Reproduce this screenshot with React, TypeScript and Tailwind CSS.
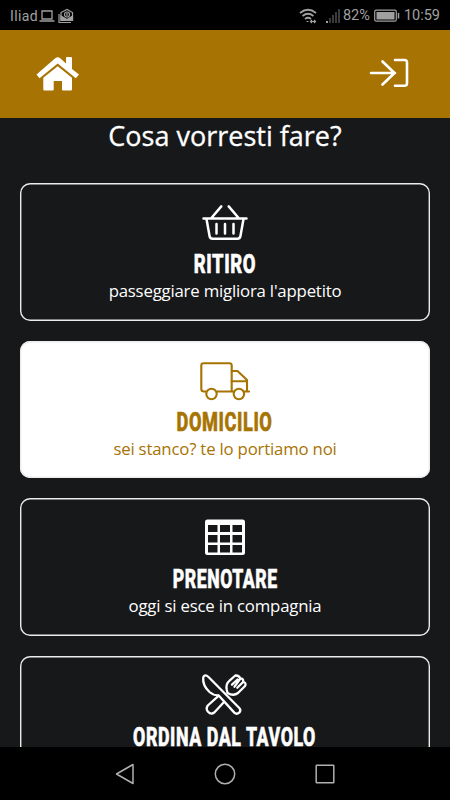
import React, { useState } from 'react'

type Choice = {
  id: string;
  title: string;
  subtitle?: string;
  titleClass: string;
  icon: React.ReactNode;
}

const BasketIcon = () => (
  <svg className="block w-[50px] h-[42px]" viewBox="0 0 50 42" fill="none" stroke="currentColor" strokeWidth="2.5" strokeLinecap="round" strokeLinejoin="round">
    <path d="M3.5 15.5H46.5M6.5 16L9.6 33.2Q10.1 35.7 12.6 35.7H37.4Q39.9 35.7 40.4 33.2L43.5 16M11.8 14.5L21.3 3.4M38.2 14.5L28.7 3.4" />
    <path d="M16.5 21V30.5M25 21V30.5M33.5 21V30.5" />
  </svg>
)

const TruckIcon = () => (
  <svg className="block w-[50px] h-[42px]" viewBox="0 0 50 42" fill="none" stroke="currentColor" strokeWidth="2.1" strokeLinecap="round" strokeLinejoin="round">
    <path d="M6 30.5H4Q1.3 30.5 1.3 28V4.5Q1.3 2.3 3.5 2.3H29.500Q31.700 2.300 31.700 4.500V30.500M17 30.500H33.500" />
    <path d="M31.700 10H37.500L47 19V30.500H49M44.500 30.500H49M31.700 20.200H47" />
    <circle cx="11.500" cy="33" r="5.200" />
    <circle cx="38.900" cy="33" r="5.200" />
  </svg>
)

const TableIcon = () => (
  <svg className="block w-[50px] h-[42px]" viewBox="0 0 50 42" fill="currentColor">
    <path fillRule="evenodd" d="M7.500 1.500H42.500Q45 1.500 45 4V34.500Q45 37 42.500 37H7.500Q5 37 5 34.500V4Q5 1.500 7.500 1.500ZM8 7V14H17.500V7ZM20 7V14H30V7ZM32.500 7V14H42V7ZM8 17V24.500H17.500V17ZM20 17V24.500H30V17ZM32.500 17V24.500H42V17ZM8 27V34.500H17.500V27ZM20 27V34.500H30V27ZM32.500 27V34.500H42V27Z" />
  </svg>
)

const CutleryIcon = () => (
  <svg className="block w-[50px] h-[42px] overflow-visible" viewBox="0 1 50 42" fill="none" stroke="currentColor" strokeWidth="2.3" strokeLinecap="round" strokeLinejoin="round">
    <path d="M4.300 .7Q6 -.3 8.500 2L39.300 33Q41.400 35.200 39.200 37.700Q36.600 39.800 34.300 37.600L18.500 20.300Q13.500 20.500 9.500 17Q2.500 10.500 3.200 3Q3.300 1.200 4.300 .7Z" />
    <path d="M35.300 .5L29.300 5.800Q25.600 8.800 26.700 14.500L27.500 18Q33.500 21.500 38 18L44.800 11.300Q46.700 8.500 44 7.300L43.100 6.600Q43.800 3.400 40.200 3.300Q39 .2 35.300 .5Z" />
    <path d="M37.500 4.500L32 9.700M40.200 3.800L34.500 11.700M43.100 7L37.300 12.800" />
    <path d="M18.500 20.800L7.800 30.500Q5.500 34 8 36.800Q11 40 14.300 37.500L24 27" />
  </svg>
)

const choices: Choice[] = [
  { id: 'ritiro', title: 'RITIRO', subtitle: "passeggiare migliora l'appetito", titleClass: 'scale-x-[0.71]', icon: <BasketIcon /> },
  { id: 'domicilio', title: 'DOMICILIO', subtitle: 'sei stanco? te lo portiamo noi', titleClass: 'scale-x-[0.7]', icon: <TruckIcon /> },
  { id: 'prenotare', title: 'PRENOTARE', subtitle: 'oggi si esce in compagnia', titleClass: 'scale-x-[0.68]', icon: <TableIcon /> },
  { id: 'tavolo', title: 'ORDINA DAL TAVOLO', titleClass: 'scale-x-[0.685]', icon: <CutleryIcon /> },
]

const StatusBar = () => (
  <div className="flex h-[30px] shrink-0 items-center bg-black pl-[10px] pr-[10px] pt-[2px] font-[Roboto,sans-serif] text-[14px] leading-none text-[#a0a0a0]">
    <span className="tracking-[0.4px]">Iliad</span>
    <svg className="ml-[1px] h-[14px] w-[16px]" viewBox="0 0 16 14" fill="none" stroke="currentColor" strokeWidth="1.3">
      <path d="M3 2H13V10H3ZM.5 12H15.5" />
    </svg>
    <svg className="ml-[3px] h-[16px] w-[16px]" viewBox="0 0 16 16" fill="none" stroke="currentColor" strokeWidth="1.2">
      <path d="M3 6V4.5L9 1.5L14.5 4.5V12.5H3ZM1 6V14.5H13" />
      <path d="M3 8L9 11.5L14.5 8V12.5H3Z" fill="currentColor" />
      <circle cx="9" cy="6.5" r="2.5" />
      <path d="M9 5V8" />
    </svg>
    <div className="ml-auto flex items-center">
      <svg className="h-[16px] w-[18px]" viewBox="0 0 18 16" fill="none" stroke="currentColor" strokeWidth="1.7">
        <path d="M1 5Q9 -1.5 17 5M3.5 8Q9 3.5 14.5 8M6 11Q9 8.5 12 11" />
        <path d="M7.5 13.5H9.5M12 13.5H16M13 12L11.5 13.5L13 15M15 12L16.5 13.5L15 15" strokeWidth="1.2" />
      </svg>
      <svg className="ml-[8px] h-[14px] w-[16px]" viewBox="0 0 16 14" fill="#3b3b3b">
        <path d="M4 9H6V14H4ZM7 6H9V14H7ZM10 3H12V14H10ZM13 0H15V14H13Z" />
        <path d="M1 12H3V14H1Z" fill="#a0a0a0" />
      </svg>
      <span className="ml-[2px] text-[14.5px]">82%</span>
      <svg className="ml-[4px] h-[14px] w-[26px]" viewBox="0 0 26 14" fill="none" stroke="currentColor">
        <rect x=".7" y="1.2" width="21.6" height="11" rx="1.5" strokeWidth="1.2" />
        <rect x="2.5" y="3" width="18" height="7.5" fill="currentColor" stroke="none" />
        <path d="M24.5 4V9.5" strokeWidth="1.5" />
      </svg>
      <span className="ml-[4px] text-[14.5px]">10:59</span>
    </div>
  </div>
)

const Header = () => (
  <header className="flex h-[88px] shrink-0 items-center justify-between bg-[#a77303] px-9 text-white">
    <button type="button" aria-label="Home">
      <svg className="block h-[36px] w-[44px]" viewBox="0 0 44 36" fill="currentColor">
        <path d="M30 2Q30 1 31 1H35Q36 1 36 2V13L43 18.5L39.8 22.2L21.7 7.5L3.5 22.2L.5 18.5L19.2 2.3Q21.7 .3 24.2 2.3L30 7.4Z" />
        <path d="M7.3 21.8L21.7 10.2L36 21.8V33.5Q36 34.5 35 34.5H27Q26 34.5 26 33.5V25H17.7V33.5Q17.7 34.5 16.7 34.5H8.3Q7.3 34.5 7.3 33.5Z" />
      </svg>
    </button>
    <button type="button" aria-label="Login" className="mr-[5px]">
      <svg className="block h-[32px] w-[40px]" viewBox="0 0 40 32" fill="none" stroke="currentColor" strokeWidth="2.6" strokeLinecap="round" strokeLinejoin="round">
        <path d="M2 15H26M13.5 3.500L25.500 15L13.500 26.500M26 2H35.500Q38 2 38 4.500V25.300Q38 27.800 35.500 27.800H26" />
      </svg>
    </button>
  </header>
)

const ChoiceCard = ({ choice, active, onSelect }: { choice: Choice; active: boolean; onSelect: () => void }) => (
  <button
    type="button"
    onClick={onSelect}
    className={`flex h-[137.5px] w-full shrink-0 flex-col items-center rounded-[10px] pt-5 shadow-[inset_0_0_0_1.4px_#ececec] ${active ? 'bg-white text-[#a77303]' : 'text-white'}`}
  >
    {choice.icon}
    <span className={`mt-[11px] mb-[6px] whitespace-nowrap font-[Roboto,sans-serif] text-[26px] leading-[17px] font-extrabold tracking-[0.8px] [-webkit-text-stroke:0.6px_currentColor] ${choice.titleClass}`}>{choice.title}</span>
    {choice.subtitle && <span className="text-[16.8px] leading-[23px] tracking-[-0.2px]">{choice.subtitle}</span>}
  </button>
)

const NavigationBar = () => (
  <nav className="flex h-[53px] shrink-0 items-center justify-between bg-black px-[115px] text-[#b0b0b0]">
    <svg className="h-[22px] w-[20px]" viewBox="0 0 20 22" fill="none" stroke="currentColor" strokeWidth="1.5" strokeLinejoin="round">
      <path d="M18 1.5V20.5L1.5 11Z" />
    </svg>
    <svg className="h-[22px] w-[22px]" viewBox="0 0 22 22" fill="none" stroke="currentColor" strokeWidth="1.5">
      <circle cx="11" cy="11" r="9.7" />
    </svg>
    <svg className="h-[20px] w-[20px]" viewBox="0 0 20 20" fill="none" stroke="currentColor" strokeWidth="1.5">
      <rect x="1.2" y="1.2" width="17.6" height="17.6" rx=".5" />
    </svg>
  </nav>
)

export default function App() {
  const [selected, setSelected] = useState<string>('domicilio');

  return (
    <div className="flex h-[800px] w-[450px] flex-col overflow-hidden bg-[#17181a] font-['Open_Sans',sans-serif] text-white">
      <StatusBar />
      <Header />
      <main className="flex min-h-0 flex-1 flex-col overflow-hidden px-5">
        <h1 className="mb-[30px] h-[35px] shrink-0 text-center text-[27px] leading-[35px] font-medium [-webkit-text-stroke:0.3px_currentColor]">Cosa vorresti fare?</h1>
        <div className="flex flex-col gap-5">
          {choices.map((choice) => (
            <ChoiceCard key={choice.id} choice={choice} active={choice.id === selected} onSelect={() => setSelected(choice.id)} />
          ))}
        </div>
      </main>
      <NavigationBar />
    </div>
  )
}
